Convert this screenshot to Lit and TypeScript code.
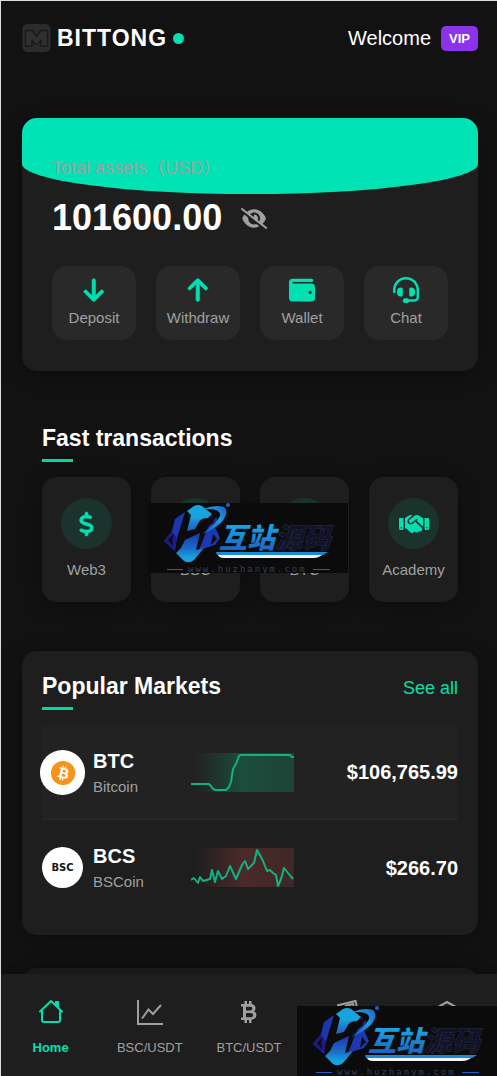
import { LitElement, html, css, svg } from "lit";
import { customElement, property } from "lit/decorators.js";

const UI_FONT = css`"Liberation Sans", Arial, "Noto Sans CJK SC", sans-serif`;

/* Icon glyphs: view box plus drawing, painted with currentColor. */
const ICONS: Record<string, { box: string; art: unknown }> = {
  down: {
    box: "0 0 384 512",
    art: svg`<path stroke="currentColor" stroke-width="14" d="M169.4 470.6c12.5 12.5 32.8 12.5 45.3 0l160-160c12.5-12.5 12.5-32.8 0-45.3s-32.8-12.5-45.3 0L224 370.8 224 64c0-17.7-14.3-32-32-32s-32 14.3-32 32l0 306.7L54.6 265.4c-12.5-12.5-32.8-12.5-45.3 0s-12.5 32.8 0 45.3l160 160z"/>`,
  },
  up: {
    box: "0 0 384 512",
    art: svg`<path stroke="currentColor" stroke-width="14" d="M214.6 41.4c-12.5-12.5-32.8-12.5-45.3 0l-160 160c-12.5 12.5-12.5 32.8 0 45.3s32.8 12.5 45.3 0L160 141.2V448c0 17.7 14.3 32 32 32s32-14.3 32-32V141.2L329.4 246.6c12.5 12.5 32.8 12.5 45.3 0s12.5-32.8 0-45.3l-160-160z"/>`,
  },
  wallet: {
    box: "0 0 512 512",
    art: svg`<path d="M64 32C28.7 32 0 60.7 0 96V416c0 35.3 28.7 64 64 64H448c35.3 0 64-28.7 64-64V192c0-35.3-28.7-64-64-64H80c-8.8 0-16-7.2-16-16s7.2-16 16-16H448c17.7 0 32-14.3 32-32s-14.3-32-32-32H64zM416 272a32 32 0 1 1 0 64 32 32 0 1 1 0-64z"/>`,
  },
  headset: {
    box: "0 0 512 512",
    art: svg`<path d="M256 48C141.1 48 48 141.1 48 256v40c0 13.3-10.7 24-24 24s-24-10.7-24-24V256C0 114.6 114.6 0 256 0S512 114.6 512 256V400.1c0 48.6-39.4 88-88.1 88L313.6 488c-8.3 14.3-23.8 24-41.6 24H240c-26.5 0-48-21.5-48-48s21.5-48 48-48h32c17.8 0 33.3 9.7 41.6 24l110.4 .1c22.1 0 40-17.9 40-40V256c0-114.9-93.1-208-208-208zM144 208h16c17.7 0 32 14.3 32 32V352c0 17.7-14.3 32-32 32H144c-35.3 0-64-28.7-64-64V272c0-35.3 28.7-64 64-64zm224 0c35.3 0 64 28.7 64 64v48c0 35.3-28.7 64-64 64H352c-17.7 0-32-14.3-32-32V240c0-17.7 14.3-32 32-32h16z"/>`,
  },
  eyeOff: {
    box: "0 0 640 512",
    art: svg`<path d="M38.8 5.1C28.4-3.1 13.3-1.2 5.1 9.2S-1.2 34.7 9.2 42.9l592 464c10.4 8.2 25.5 6.3 33.7-4.1s6.3-25.5-4.1-33.7L525.6 386.7c39.6-40.6 66.4-86.1 79.9-118.4c3.3-7.9 3.3-16.7 0-24.6c-14.9-35.7-46.2-87.7-93-131.1C465.5 68.8 400.8 32 320 32c-68.2 0-125 26.3-169.3 60.8L38.8 5.1zM223.1 149.5C248.6 126.2 282.7 112 320 112c79.5 0 144 64.5 144 144c0 24.9-6.3 48.3-17.4 68.7L408 294.5c8.4-19.3 10.6-41.4 4.8-63.3c-11.1-41.5-47.8-69.4-88.6-71.1c-5.8-.2-9.2 6.1-7.4 11.7c2.1 6.4 3.3 13.2 3.3 20.3c0 10.2-2.4 19.8-6.6 28.3l-90.3-70.8zM373 389.9c-16.4 6.5-34.3 10.1-53 10.1c-79.5 0-144-64.5-144-144c0-6.9 .5-13.6 1.4-20.2L83.1 161.5C60.3 191.2 44 220.8 34.5 243.7c-3.3 7.9-3.3 16.7 0 24.6c14.9 35.7 46.2 87.7 93 131.1C174.5 443.2 239.2 480 320 480c47.8 0 89.9-12.9 126.2-32.5L373 389.9z"/>`,
  },
  dollar: {
    box: "0 0 320 512",
    art: svg`<path stroke="currentColor" stroke-width="14" d="M160 0c17.7 0 32 14.3 32 32V67.7c1.6 .2 3.1 .4 4.7 .7c.4 .1 .7 .1 1.1 .2l48 8.8c17.4 3.2 28.9 19.9 25.7 37.2s-19.9 28.9-37.2 25.7l-47.5-8.7c-31.3-4.6-58.9-1.5-78.3 6.2s-27.2 18.3-29 28.1c-2 10.7-.5 16.7 1.2 20.4c1.8 3.9 5.5 8.3 12.8 13.2c16.3 10.7 41.3 17.7 73.7 26.3l2.9 .8c28.6 7.6 63.6 16.8 89.6 33.8c14.2 9.3 27.6 21.9 35.9 39.5c8.5 17.9 10.3 37.9 6.4 59.2c-6.9 38-33.1 63.4-65.6 76.7c-13.7 5.6-28.6 9.2-44.4 11V480c0 17.7-14.3 32-32 32s-32-14.3-32-32V445.1c-.4-.1-.9-.1-1.3-.2l-.2 0 0 0c-24.4-3.8-64.5-14.3-91.5-26.3c-16.1-7.2-23.4-26.1-16.2-42.2s26.1-23.4 42.2-16.2c20.9 9.3 55.3 18.5 75.2 21.6c31.9 4.7 58.2 2 76-5.3c16.9-6.9 24.6-16.9 26.8-28.9c1.9-10.6 .4-16.7-1.3-20.4c-1.9-4-5.6-8.4-13-13.3c-16.4-10.7-41.5-17.7-74-26.3l-2.8-.7 0 0C119.4 279.3 84.4 270 58.4 253c-14.2-9.3-27.5-22-35.8-39.6c-8.4-17.9-10.1-37.9-6.1-59.2C23.7 116 52.3 91.2 84.8 78.3c13.3-5.3 27.9-8.9 43.2-11V32c0-17.7 14.3-32 32-32z"/>`,
  },
  handshake: {
    box: "0 0 640 512",
    art: svg`<path d="M323.4 85.2l-96.8 78.4c-16.1 13-19.2 36.4-7 53.1c12.9 17.8 38 21.3 55.3 7.8l99.3-77.2c7-5.4 17-4.2 22.5 2.8s4.2 17-2.8 22.5l-20.9 16.2L512 316.8V128h-.7l-3.9-2.5L434.8 79c-15.3-9.8-33.2-15-51.4-15c-21.8 0-43 7.5-60 21.2zm22.8 124.4l-51.7 40.2C263 274.3 217.3 268 193.7 235.6c-22.2-30.5-16.6-73.1 12.7-96.8l83.2-67.3c-11.6-4.9-24.1-7.4-36.8-7.4C234 64 215.7 69.6 200 80l-72 48V352h28.2l91.4 83.4c19.6 17.9 49.9 16.5 67.8-3.1c5.5-6.1 9.2-13.2 11.1-20.6l17 15.6c19.5 17.9 49.9 16.6 67.8-2.9c4.5-4.9 7.8-10.6 9.9-16.5c19.4 13 45.8 10.3 62.1-7.5c17.9-19.5 16.6-49.9-2.9-67.8l-134.2-123zM16 128c-8.8 0-16 7.2-16 16V352c0 17.7 14.3 32 32 32H64c17.7 0 32-14.3 32-32V128H16zM48 320a16 16 0 1 1 0 32 16 16 0 1 1 0-32zM544 128V352c0 17.7 14.3 32 32 32h32c17.7 0 32-14.3 32-32V144c0-8.8-7.2-16-16-16H544zm32 208a16 16 0 1 1 32 0 16 16 0 1 1-32 0z"/>`,
  },
  bitcoin: {
    box: "0 0 28 28",
    art: svg`<path fill-rule="evenodd" d="M9.500 3H12v3h2V3h2.500v3.100c2.600.4 4 1.900 4 4.100 0 1.400-.6 2.500-1.600 3.100 1.600.7 2.500 2 2.500 3.800 0 2.700-1.900 4.300-4.900 4.600V25H14v-3h-2v3H9.500v-3H6v-2.500h2V8.500H6V6h3.500zM11 8.700v3.700h4c1.500 0 2.300-.6 2.300-1.900s-.8-1.800-2.300-1.800zM11 15v4.300h4.500c1.700 0 2.600-.8 2.600-2.200S17.200 15 15.500 15z"/>`,
  },
  home: {
    box: "0 0 28 28",
    art: svg`<g fill="none" stroke="currentColor" stroke-width="2" stroke-linejoin="round" stroke-linecap="round"><path d="M3 13.500 14 3l11 10.500"/><path d="M5 13v9a2 2 0 0 0 2 2h14a2 2 0 0 0 2-2v-9"/></g><path d="M18 3h4v8l-4-4z"/>`,
  },
  chart: {
    box: "0 0 28 28",
    art: svg`<g fill="none" stroke="currentColor" stroke-width="2"><path d="M2 2v24h25"/><path d="m6 20.500 6.500-9L17 16l8-9"/></g>`,
  },
  notes: {
    box: "0 0 28 28",
    art: svg`<g fill="none" stroke="currentColor" stroke-width="2"><path d="M3 7.500 21.500 3l1.200 5"/><path d="m11 8 8-2 .6 2"/><rect x="2" y="9.500" width="24" height="15" rx="1"/></g>`,
  },
  cube: {
    box: "0 0 28 28",
    art: svg`<g fill="none" stroke="currentColor" stroke-width="2"><path d="m14 4 10 5.500v10L14 25 4 19.500v-10z"/><path d="m4 9.500 10 5.500 10-5.500M14 15v10"/></g>`,
  },
};

@customElement("ui-icon")
class UiIcon extends LitElement {
  static styles = css`
    :host { display: block; height: 26px; }
    svg { display: block; height: 100%; width: auto; margin: 0 auto; fill: currentColor; overflow: visible; }
  `;
  @property() name = "";
  render() {
    const icon = ICONS[this.name];
    return html`<svg viewBox=${icon.box} aria-hidden="true">${icon.art}</svg>`;
  }
}

/* Floating brand stamp of the source-code shop. */
@customElement("shop-stamp")
class ShopStamp extends LitElement {
  static styles = css`
    :host { display: block; width: 200px; height: 70px; background: #0b0b0b; pointer-events: none; }
    svg { display: block; }
    .name { font: italic 900 28px "Noto Sans CJK SC", sans-serif; }
    .url { font: 9px "DejaVu Sans Mono", monospace; letter-spacing: 2px; fill: #30405c; }
  `;
  render() {
    return html`<svg width="200" height="70" viewBox="0 0 200 70" role="img" aria-label="互站源码">
      <defs>
        <linearGradient id="gem" x1="0" y1="0" x2="0" y2="1">
          <stop offset="0.45" stop-color="#17a3e0" /><stop offset="0.75" stop-color="#1c78cc" /><stop offset="1" stop-color="#1c62c0" />
        </linearGradient>
        <linearGradient id="base" x1="0" y1="0" x2="0" y2="1">
          <stop offset="0.1" stop-color="#1c3fb4" /><stop offset="0.55" stop-color="#1b6fc6" /><stop offset="0.85" stop-color="#17a3e0" />
        </linearGradient>
        <linearGradient id="ink" x1="0" y1="0" x2="0" y2="1">
          <stop offset="0.3" stop-color="#18a0e2" /><stop offset="0.9" stop-color="#1d5fbe" />
        </linearGradient>
        <linearGradient id="swoosh" x1="1" y1="0" x2="0" y2="1">
          <stop offset="0" stop-color="#1c5ec4" /><stop offset="0.4" stop-color="#18a0e0" /><stop offset="1" stop-color="#1b4cba" />
        </linearGradient>
      </defs>
      <path fill="#1c36ae" d="m27 16 10-7-9 30-1 9-11-10 8-10z" />
      <path fill="#1d1a86" d="m24 28-8 10 11 10 2-12z" />
      <path fill="#0b0b0b" d="m26 31-6 6 5 6-1-6z" />
      <path fill="#1c38b2" d="m61 23 4-3 7 15-5 7-16 5 7-18z" />
      <path fill="#0b0b0b" d="m65 31 4 5-6 6 1-6z" />
      <path fill="#1d2a94" d="m66 16 3-2v4l-4 4z" />
      <path fill="url(#gem)" d="M39 8 46 3q4-2 8 0l10 8-4 4q-7 0-9 4l-4 7-8 2 4-16z" />
      <path fill="url(#base)" d="m33 45 4-8 15-7-4 17 8-2-10 12q-5 4-10 1l-8-8z" />
      <path fill="url(#swoosh)" d="M56 6Q67 1 76 4q5 4 0 12-6 9-22 15 14-10 18-18 2-8-16-7z" />
      <circle cx="80" cy="2" r="2" fill="#1c62c8" />
      <text class="name" x="71" y="45" fill="url(#ink)">互站</text>
      <text class="name" x="127" y="45" fill="#12112c" stroke="#24303c" stroke-width="0.5">源码</text>
      <path fill="#f2f6fa" d="M69 50h107q-4 5-11 5H76q-6 0-7-5z" />
      <path fill="#1a8ad6" d="M68 49h112l-5 3H69z" />
      <path fill="#1c62c8" d="M19 66h16v1H19zM165 66h17v1h-17z" />
      <text class="url" x="40" y="69">www.huzhanym.com</text>
    </svg>`;
  }
}

@customElement("spark-line")
class SparkLine extends LitElement {
  static styles = css`
    :host { display: block; }
    svg { display: block; width: 100%; height: 39px; }
  `;
  @property() points = "";
  @property() tint = "#14805a";
  render() {
    return html`<svg viewBox="0 0 103 39" preserveAspectRatio="none" aria-hidden="true">
      <defs>
        <linearGradient id="fade">
          <stop offset="0.05" stop-color=${this.tint} stop-opacity="0" />
          <stop offset="0.5" stop-color=${this.tint} stop-opacity="0.34" />
          <stop offset="1" stop-color=${this.tint} stop-opacity="0.26" />
        </linearGradient>
      </defs>
      <rect width="103" height="39" fill="url(#fade)" />
      <polyline points=${this.points} fill="none" stroke="#10b183" stroke-width="2" stroke-linejoin="round" />
    </svg>`;
  }
}

const ACTIONS = [
  { icon: "down", label: "Deposit" },
  { icon: "up", label: "Withdraw" },
  { icon: "wallet", label: "Wallet" },
  { icon: "headset", label: "Chat" },
];

const SHORTCUTS = [
  { icon: "dollar", label: "Web3" },
  { icon: "chart", label: "BSC" },
  { icon: "bitcoin", label: "BTC" },
  { icon: "handshake", label: "Academy" },
];

const MARKETS = [
  {
    code: "BTC", name: "Bitcoin", price: "$106,765.99", active: true, tint: "#0fa070",
    points: "0,31 18,31 20,33 22,36 25,37 35,37 38,34 40,29 42,16 45,11 48,3 50,2 99,2 101,4 103,4",
  },
  {
    code: "BCS", name: "BSCoin", price: "$266.70", active: false, tint: "#a04040",
    points: "0,32 3,30 7,35 9,29 12,33 19,31 21,22 24,34 27,23 31,31 35,28 39,18 45,31 51,17 54,13 57,21 63,15 66,2 70,9 72,13 76,23 79,22 82,25 85,27 87,38 90,31 93,20 97,25 102,31",
  },
];

const TABS = [
  { icon: "home", label: "Home", current: true },
  { icon: "chart", label: "BSC/USDT" },
  { icon: "bitcoin", label: "BTC/USDT" },
  { icon: "notes", label: "" },
  { icon: "cube", label: "" },
];

@customElement("app-root")
class AppRoot extends LitElement {
  static styles = css`
    :host {
      display: flex;
      flex-direction: column;
      position: relative;
      box-sizing: border-box;
      height: 100vh;
      overflow: hidden;
      border-top: 1px solid #dcdcdc;
      border-left: 1px solid #dcdcdc;
      background: #121212;
      color: #fff;
      font-family: ${UI_FONT};
      font-size: 15px;
      line-height: 18px;
    }
    * { box-sizing: border-box; }
    h1, h2, p, ul { margin: 0; padding: 0; }
    ul { list-style: none; }
    button { border: 0; padding: 0; background: none; color: inherit; font: inherit; cursor: pointer; }
    a { color: inherit; text-decoration: none; }
    main { flex: 1; min-height: 0; overflow-y: auto; scrollbar-width: none; padding: 23px 19px 0 21px; }

    .top { display: flex; justify-content: space-between; align-items: center; height: 28px; }
    .brand { display: flex; align-items: center; gap: 6px; }
    .brand h1 { font-size: 23px; line-height: 28px; letter-spacing: 1px; }
    .dot { width: 11px; height: 11px; border-radius: 50%; background: #00e0b0; }
    .hello { display: flex; align-items: center; gap: 10px; font-size: 20px; line-height: 28px; }
    .vip { padding: 0 8px; border-radius: 5px; background: #8a33ea; font-size: 13px; line-height: 25px; font-weight: bold; }

    .card { border-radius: 15px; background: #1e1e1e; box-shadow: 0 4px 20px rgba(0, 0, 0, 0.3); }
    .assets { position: relative; overflow: hidden; isolation: isolate; margin-top: 66px; padding: 40px 30px 31px; }
    .assets::before {
      content: "";
      position: absolute;
      z-index: -1;
      inset: 0 0 70% 0;
      border-radius: 0 0 50% 50% / 0 0 40% 40%;
      background: #00e3b4;
    }
    .caption { color: #a0a0a0; font-size: 18px; line-height: 20px; }
    .balance { display: flex; align-items: center; gap: 19px; margin: 20px 0 28px; font-size: 36px; line-height: 40px; font-weight: bold; }
    .eye { color: #a0a0a0; }
    .eye ui-icon { height: 21px; }
    .grid { display: grid; grid-template-columns: repeat(4, 1fr); gap: 20px; color: #a0a0a0; text-align: center; }
    .action { display: grid; gap: 6px; padding: 11px 0 13px; border-radius: 15px; background: #292929; }
    .action ui-icon { color: #00e0b0; }

    .fast { margin-top: 54px; padding: 0 20px; }
    h2 { font-size: 23px; line-height: 26px; }
    h2::after { content: ""; display: block; width: 31px; height: 3px; margin: 8px 0 15px; background: #00d9a3; }
    .shortcut { display: grid; justify-items: center; gap: 12px; padding: 21px 0 23px; }
    .disc { display: grid; place-items: center; width: 51px; height: 51px; border-radius: 50%; background: #1c322c; color: #00e0b0; }
    .disc ui-icon { height: 24px; }

    .markets { margin-top: 49px; padding: 22px 20px 20px; }
    .head { display: flex; justify-content: space-between; align-items: flex-start; }
    .more { color: #00e0a8; font-size: 18px; line-height: 30px; }
    .row {
      display: grid;
      grid-template-columns: 41px 4fr 103px 7fr;
      align-items: center;
      gap: 10px;
      height: 95px;
    }
    .row.active { border-bottom: 1px solid #282828; background: #222; }
    .coin { display: grid; place-items: center; width: 41px; height: 41px; border-radius: 50%; background: #fff; color: #151515; font: bold 10px "DejaVu Sans", sans-serif; }
    .active .coin { transform: scale(1.1); }
    .code { margin-bottom: 5px; font-size: 20px; line-height: 24px; font-weight: bold; }
    .name { color: #a0a0a0; }
    .price { font-size: 20px; line-height: 24px; font-weight: bold; text-align: right; }
    .next { min-height: 120px; margin-top: 33px; }

    nav {
      position: relative;
      display: grid;
      grid-template-columns: repeat(5, 1fr);
      padding: 24px 0 20px;
      background: #1e1e1e;
      box-shadow: 0 -4px 20px rgba(0, 0, 0, 0.3);
      color: #a0a0a0;
      font-size: 13px;
      line-height: 16px;
      text-align: center;
    }
    .tab { display: grid; gap: 14px; align-content: start; }
    .tab ui-icon { height: 28px; }
    .tab.current { color: #00e0b0; font-weight: bold; }

    .stamp-mid { position: absolute; left: 50%; top: 502px; margin-left: -101px; }
    .stamp-end { position: absolute; right: 0; bottom: 0; }
  `;

  private coinArt(code: string) {
    if (code !== "BTC") return html`BSC`;
    return html`<svg width="22" height="22" viewBox="0 0 32 32" aria-hidden="true">
      <circle cx="16" cy="16" r="16" fill="#f7931a" />
      <path fill="#fff" d="M23.189 14.020c.314-2.096-1.283-3.223-3.465-3.975l.708-2.840-1.728-.430-.690 2.765c-.454-.114-.920-.220-1.385-.326l.695-2.783L15.596 6l-.708 2.839c-.376-.086-.746-.170-1.104-.260l.002-.009-2.384-.595-.460 1.846s1.283.294 1.256.312c.700.175.826.638.805 1.006l-.806 3.235c.048.012.110.030.180.057l-.183-.045-1.130 4.532c-.086.212-.303.531-.793.410.018.025-1.256-.313-1.256-.313l-.858 1.978 2.250.561c.418.105.828.215 1.231.318l-.715 2.872 1.727.430.708-2.840c.472.127.930.245 1.378.357l-.706 2.828 1.728.430.715-2.866c2.948.558 5.164.333 6.097-2.333.752-2.146-.037-3.385-1.588-4.192 1.130-.260 1.980-1.003 2.207-2.538zm-3.950 5.538c-.533 2.147-4.148.986-5.320.695l.950-3.805c1.172.293 4.929.872 4.370 3.110zm.535-5.569c-.487 1.953-3.495.960-4.470.717l.860-3.450c.975.243 4.118.696 3.610 2.733z" />
    </svg>`;
  }

  render() {
    return html`
      <main>
        <header class="top">
          <div class="brand">
            <svg width="29" height="28" viewBox="0 0 29 28" aria-hidden="true">
              <rect x="0.500" width="28" height="28" rx="5" fill="#2c2c2c" />
              <path d="M3.500 6.500h7l4 6 4-6h7V22h-6.500v-6l-3 4h-3l-3-4v6H3.500z" fill="#303030" stroke="#1a1a1a" stroke-width="1.500" stroke-linejoin="round" />
            </svg>
            <h1>BITTONG</h1>
            <span class="dot"></span>
          </div>
          <div class="hello"><span>Welcome</span><span class="vip">VIP</span></div>
        </header>

        <section class="card assets">
          <p class="caption">Total assets（USD）</p>
          <div class="balance">
            <span>101600.00</span>
            <button class="eye" aria-label="Hide balance"><ui-icon name="eyeOff"></ui-icon></button>
          </div>
          <div class="grid">
            ${ACTIONS.map((a) => html`<button class="action"><ui-icon name=${a.icon}></ui-icon><span>${a.label}</span></button>`)}
          </div>
        </section>

        <section class="fast">
          <h2>Fast transactions</h2>
          <div class="grid">
            ${SHORTCUTS.map((s) => html`<a class="card shortcut" href="#"><span class="disc"><ui-icon name=${s.icon}></ui-icon></span><span>${s.label}</span></a>`)}
          </div>
        </section>

        <section class="card markets">
          <div class="head"><h2>Popular Markets</h2><a class="more" href="#">See all</a></div>
          <ul>
            ${MARKETS.map((m) => html`<li class="row ${m.active ? "active" : ""}">
              <span class="coin">${this.coinArt(m.code)}</span>
              <div><p class="code">${m.code}</p><p class="name">${m.name}</p></div>
              <spark-line points=${m.points} tint=${m.tint}></spark-line>
              <span class="price">${m.price}</span>
            </li>`)}
          </ul>
        </section>

        <section class="card next"></section>
      </main>

      <nav>
        ${TABS.map((t) => html`<a class="tab ${t.current ? "current" : ""}" href="#"><ui-icon name=${t.icon}></ui-icon><span>${t.label}</span></a>`)}
      </nav>

      <shop-stamp class="stamp-mid"></shop-stamp>
      <shop-stamp class="stamp-end"></shop-stamp>
    `;
  }
}
